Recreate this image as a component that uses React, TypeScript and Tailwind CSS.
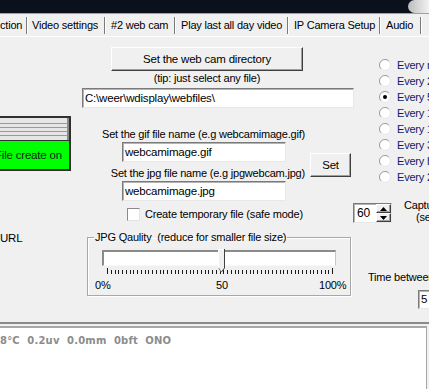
import React from 'react';

const raised =
  'bg-[#f0f0f0] border border-t-white border-l-white border-r-[#404040] border-b-[#404040] shadow-[inset_-1px_-1px_0_#a0a0a0]';
const sunken =
  'bg-white border border-t-[#7a7a7a] border-l-[#7a7a7a] border-r-[#e8e8e8] border-b-[#e8e8e8] shadow-[inset_1px_1px_0_#b4b4b4]';

const tabs = [
  { label: 'ction', w: 'w-[26px]', pl: 'pl-0' },
  { label: 'Video settings', w: 'w-[76px]', pl: 'pl-[4px]' },
  { label: '#2 web cam', w: 'w-[68px]', pl: 'pl-[5px]' },
  { label: 'Play last all day video', w: 'w-[111px]', pl: 'pl-[5px]' },
  { label: 'IP Camera Setup', w: 'w-[90px]', pl: 'pl-[5px]' },
  { label: 'Audio', w: 'w-[39px]', pl: 'pl-[5px]' },
];

const intervals = [
  'Every minute',
  'Every 2 minutes',
  'Every 5 minutes',
  'Every 10 minutes',
  'Every 15 minutes',
  'Every 30 minutes',
  'Every hour',
  'Every 2 hours',
];

function Radio({ checked }: { checked?: boolean }) {
  return (
    <svg width="12" height="12" viewBox="0 0 12 12" className="shrink-0">
      <circle cx="6" cy="6" r="5.5" fill="#fff" />
      <path d="M2.1 9.9 A5.5 5.5 0 0 1 9.9 2.1" stroke="#9a9a9a" strokeWidth="1" fill="none" />
      <path d="M2.1 9.9 A5.5 5.5 0 0 0 9.9 2.1" stroke="#e6e6e6" strokeWidth="1" fill="none" />
      {checked && <circle cx="6" cy="6" r="2" fill="#000" />}
    </svg>
  );
}

function Ticks() {
  const ticks = Array.from({ length: 61 }, (_, i) => i);
  return (
    <svg width="234" height="8" viewBox="0 0 234 8" className="block">
      {ticks.map((i) => {
        const x = Math.round(5 + i * 3.75);
        const end = i === 0 || i === 60;
        return <rect key={i} x={x} y={end ? 0 : 2} width="1" height={end ? 6 : 4} fill="#1a1a1a" />;
      })}
    </svg>
  );
}

function Spinner() {
  return (
    <div className={`${sunken} shrink-0 w-[39px] h-[20px] flex items-center justify-between`}>
      <span className="pl-[3px] text-[12px]">60</span>
      <div className="w-[15px] h-full flex flex-col">
        <div className={`${raised} flex-1 flex items-center justify-center`}>
          <svg width="7" height="4" viewBox="0 0 7 4"><path d="M0 4 L3.5 0 L7 4 Z" fill="#000" /></svg>
        </div>
        <div className={`${raised} flex-1 flex items-center justify-center`}>
          <svg width="7" height="4" viewBox="0 0 7 4"><path d="M0 0 L3.5 4 L7 0 Z" fill="#000" /></svg>
        </div>
      </div>
    </div>
  );
}

export default function App() {
  return (
    <div className="w-[429px] h-[389px] overflow-hidden bg-[#f0f0f0] text-black text-[11px] leading-[13px] tracking-[-0.2px] font-['Liberation_Sans',Arial,sans-serif] flex flex-col">
      {/* title strip */}
      <div className="h-[13px] bg-[#0b111c] flex justify-end shrink-0">
        <div className="w-[21px] h-[13px] rounded-l-full bg-gradient-to-r from-[#bdbdbd] to-[#f2f2f2]" />
      </div>
      <div className="h-[1px] bg-[#a0a0a0] shrink-0" />

      {/* tabs */}
      <div className="h-[23px] flex items-center shrink-0 border-b border-white">
        {tabs.map((t) => (
          <React.Fragment key={t.label}>
            <div className={`${t.w} ${t.pl} shrink-0 whitespace-nowrap text-[11px] leading-[14px]`}>{t.label}</div>
            <div className="shrink-0 w-[2px] h-[17px] border-l border-l-[#7a7a7a] border-r border-r-white" />
          </React.Fragment>
        ))}
      </div>

      {/* main panel */}
      <div className="h-[285px] flex shrink-0">
        {/* left column */}
        <div className="w-[82px] shrink-0 flex flex-col">
          <div className="mt-[79px] w-[71px] h-[55px] border-2 border-l-0 border-[#303030] flex flex-col">
            <div className="h-[22px] border-r-2 border-r-[#8a8a8a] bg-[#e6e6e6] flex flex-col justify-center gap-[3px] py-[2px]">
              <div className="h-[1px] bg-[#9a9a9a]" />
              <div className="h-[1px] bg-[#9a9a9a]" />
              <div className="h-[1px] bg-[#9a9a9a]" />
              <div className="h-[1px] bg-[#9a9a9a]" />
            </div>
            <div className="flex-1 bg-[#00ff00] border-t border-[#303030] flex items-center overflow-hidden">
              <span className="-ml-[5px] whitespace-nowrap text-[11.5px] text-[#1a1a1a]">File create on</span>
            </div>
          </div>
          <div className="mt-[61px] text-[11.5px] leading-[13px]">URL</div>
        </div>

        {/* centre column */}
        <div className="w-[271px] shrink-0 flex flex-col">
          <div className={`${raised} ml-[29px] mt-[10px] w-[192px] h-[24px] flex items-center justify-center text-[11.5px]`}>
            Set the web cam directory
          </div>
          <div className="w-[250px] h-[14px] leading-[14px] text-center">(tip: just select any file)</div>
          <div className={`${sunken} mt-[3px] w-[272px] h-[20px] flex items-center pl-[2px] whitespace-nowrap text-[11.5px]`}>
            C:\weer\wdisplay\webfiles\
          </div>

          <div className="flex mt-[19px]">
            <div className="w-[223px] flex flex-col">
              <div className="h-[14px] leading-[14px] text-right whitespace-nowrap">Set the gif file name (e.g webcamimage.gif)</div>
              <div className={`${sunken} ml-[40px] mt-[1px] w-[164px] h-[20px] flex items-center pl-[2px] text-[11.5px]`}>
                webcamimage.gif
              </div>
              <div className="mt-[4px] h-[14px] leading-[14px] text-right whitespace-nowrap">Set the jpg file name (e.g jpgwebcam.jpg)</div>
              <div className={`${sunken} ml-[40px] mt-[1px] w-[164px] h-[20px] flex items-center pl-[2px] text-[11.5px]`}>
                webcamimage.jpg
              </div>
            </div>
            <div className={`${raised} ml-[5px] mt-[26px] w-[41px] h-[24px] flex items-center justify-center text-[11.5px]`}>
              Set
            </div>
          </div>

          <div className="mt-[6px] ml-[45px] h-[14px] flex items-center gap-[5px]">
            <div className="shrink-0 w-[13px] h-[13px] bg-white border border-t-[#8a8a8a] border-l-[#8a8a8a] border-r-[#e4e4e4] border-b-[#e4e4e4]" />
            <span className="whitespace-nowrap">Create temporary file (safe mode)</span>
          </div>

          <fieldset className="mt-[10px] ml-[5px] w-[264px] h-[65px] border border-[#a8a8a8] shadow-[inset_1px_1px_0_#fff,1px_1px_0_#fff] m-0 p-0">
            <legend className="ml-[6px] px-[1px] leading-[13px] whitespace-nowrap">
              JPG Qaulity&nbsp; (reduce for smaller file size)
            </legend>
            <div className="ml-[14px] mt-[6px] relative w-[234px] h-[16px] bg-white border-t-2 border-l-2 border-[#8a8a8a] border-r border-b border-r-[#c8c8c8] border-b-[#f8f8f8]">
              <svg width="7" height="24" viewBox="0 0 7 24" className="absolute left-[114px] -top-[3px]">
                <path d="M0 0 H7 V19 L3.5 23 L0 19 Z" fill="#f0f0f0" />
                <path d="M0.5 19 V0.5 H6" stroke="#fff" fill="none" />
                <path d="M6.5 0 V19 L3.5 23" stroke="#404040" fill="none" />
                <path d="M0.5 19 L3.5 23" stroke="#808080" fill="none" />
              </svg>
            </div>
            <div className="ml-[14px] mt-[2px]">
              <Ticks />
            </div>
            <div className="flex mt-[3px] leading-[13px]">
              <span className="ml-[7px] w-[121px]">0%</span>
              <span className="w-[103px]">50</span>
              <span>100%</span>
            </div>
          </fieldset>
        </div>

        {/* right column */}
        <div className="flex-1 overflow-hidden flex flex-col">
          <div className="mt-[20px] flex flex-col">
            {intervals.map((label, i) => (
              <div key={label} className="h-[16px] flex items-center">
                <div className="ml-[26px] shrink-0">
                  <Radio checked={i === 2} />
                </div>
                <span className="ml-[6px] whitespace-nowrap text-[#14186a]">{label}</span>
              </div>
            ))}
          </div>

          <div className="mt-[18px] flex items-start">
            <Spinner />
            <div className="ml-[12px] -mt-[4px] flex flex-col leading-[12px] whitespace-nowrap">
              <span>Capture interval</span>
              <span className="pl-[12px]">(seconds)</span>
            </div>
          </div>

          <div className="mt-[48px] ml-[15px] whitespace-nowrap">Time between captures</div>
          <div className={`${sunken} shrink-0 mt-[6px] ml-[65px] w-[40px] h-[19px] flex items-center pl-[2px] text-[11.5px]`}>5</div>
        </div>
      </div>

      {/* lower split */}
      <div className="h-[2px] bg-[#8a8a8a] shrink-0" />
      <div className="h-[2px] shrink-0" />
      <div className="flex-1 bg-white border-t-2 border-t-[#a8a8a8] border-r border-r-[#a8a8a8] mr-[2px] pt-[7px]">
        <div className="whitespace-nowrap font-['DejaVu_Sans',sans-serif] font-bold text-[10px] leading-[12px] tracking-[0.2px] text-[#8c8c8c]">
          8°C&nbsp; 0.2uv&nbsp; 0.0mm&nbsp; 0bft&nbsp; ONO
        </div>
      </div>
    </div>
  );
}
